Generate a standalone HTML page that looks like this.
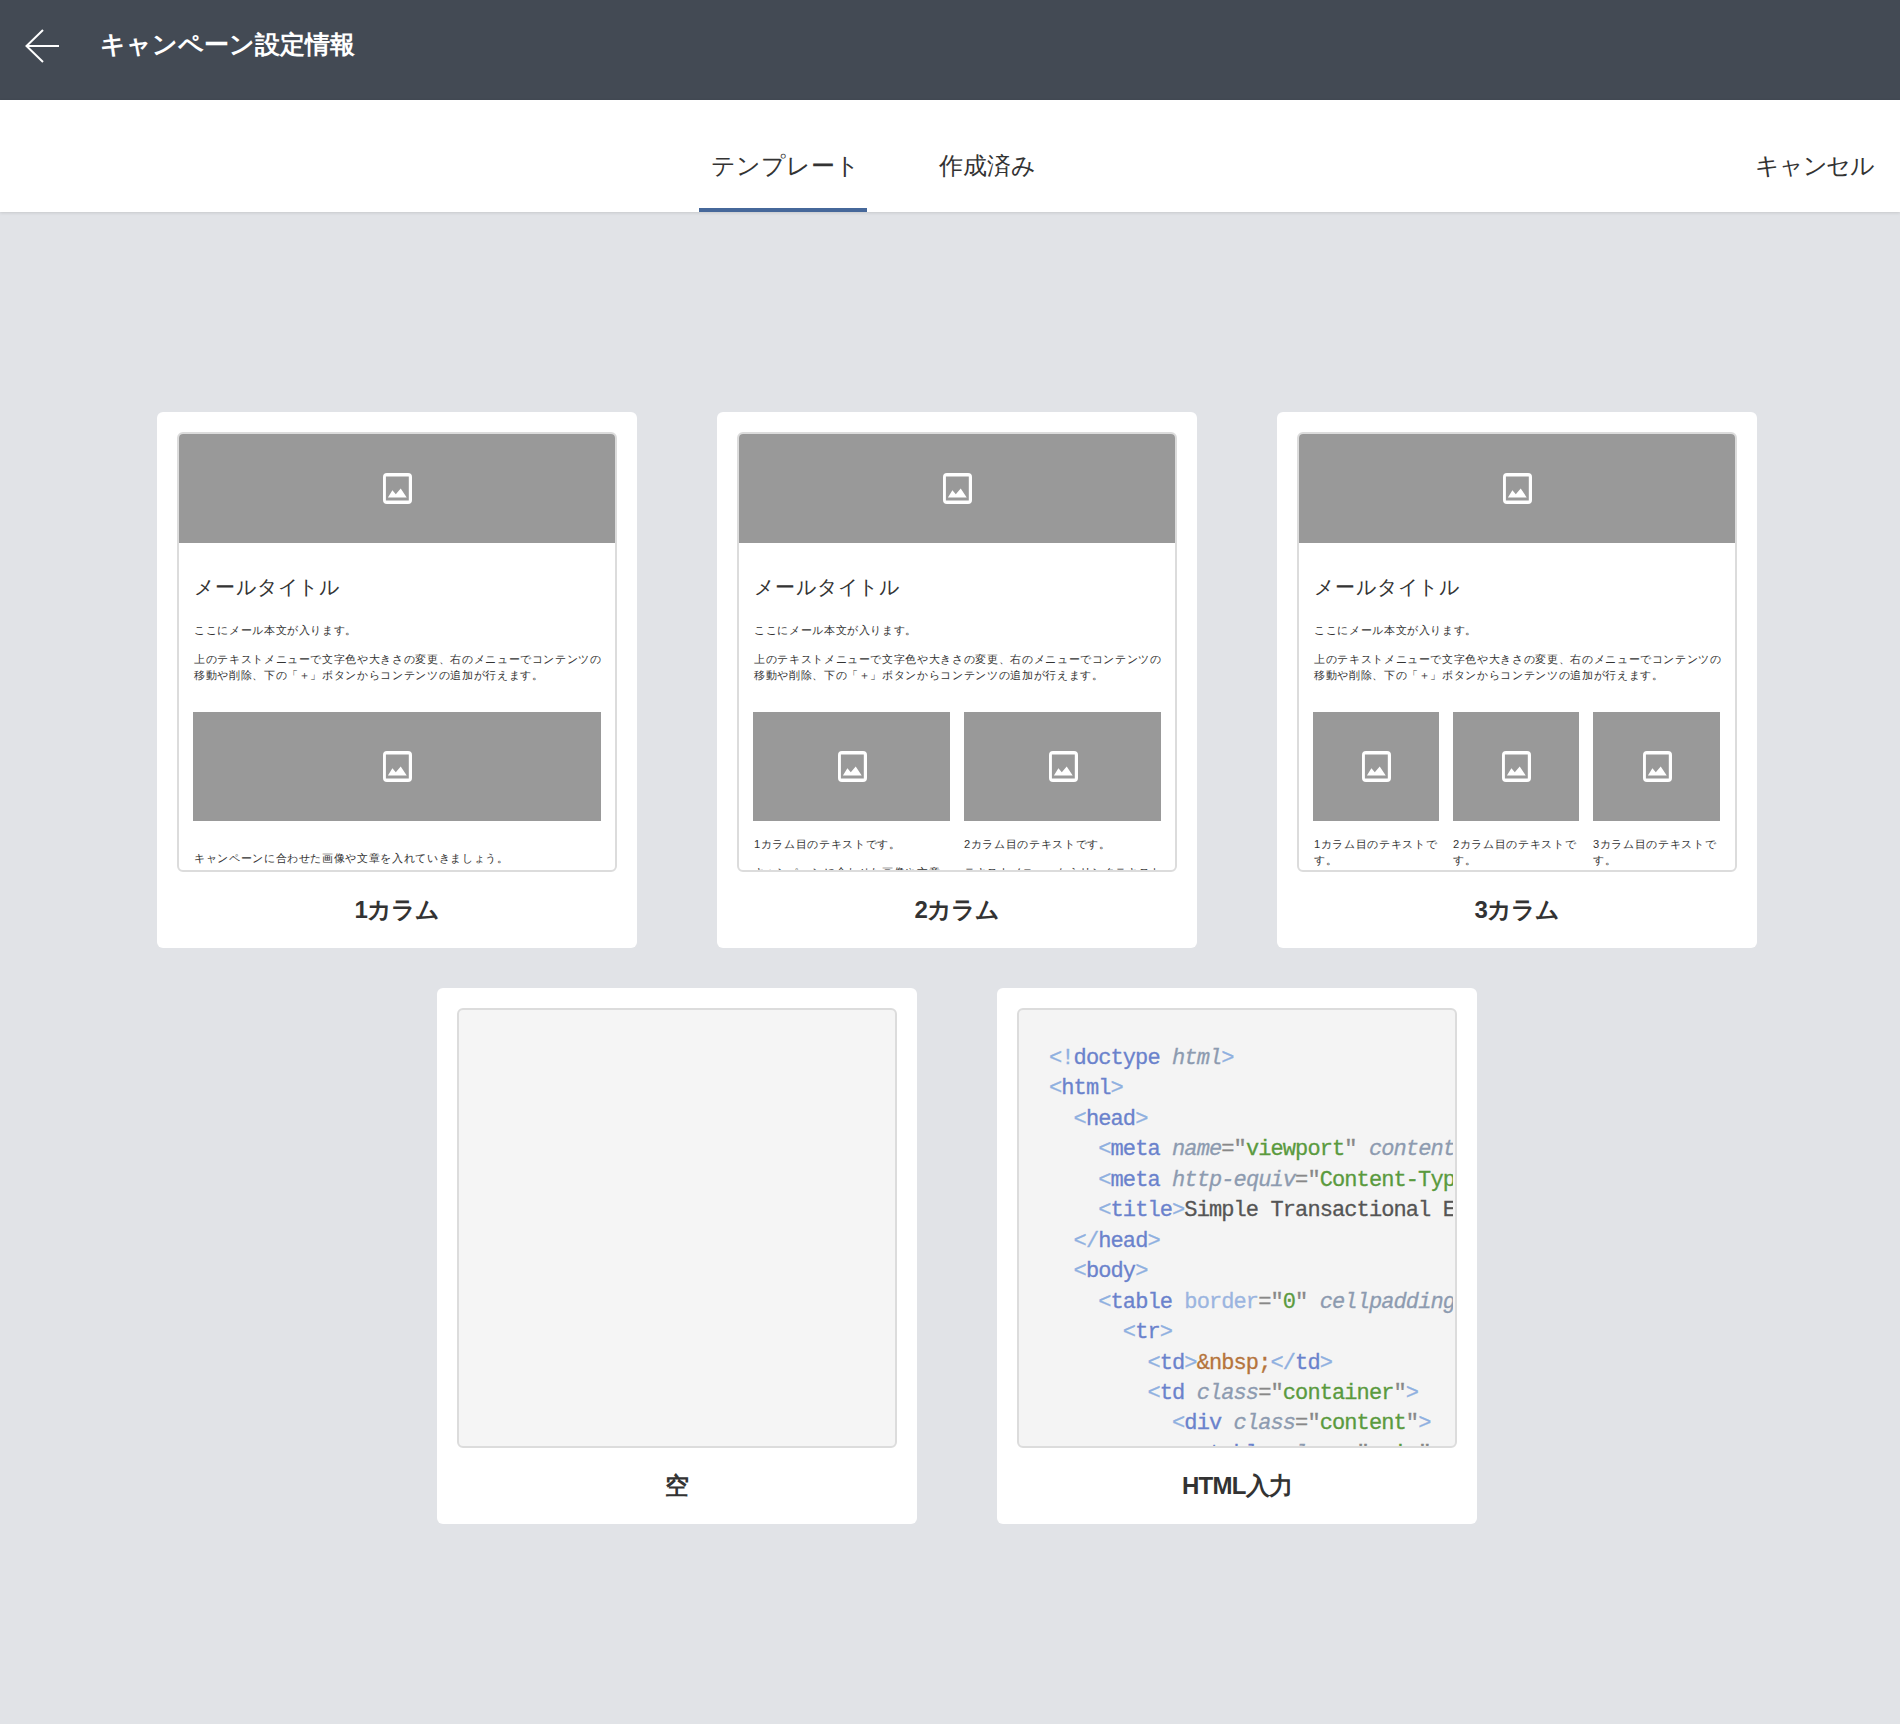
<!DOCTYPE html>
<html lang="ja">
<head>
<meta charset="utf-8">
<style>
html,body{margin:0;padding:0}
body{width:1900px;height:1724px;background:#e1e3e7;position:relative;overflow:hidden;font-family:"Liberation Sans",sans-serif;color:#333}
.hdr{position:absolute;left:0;top:0;width:1900px;height:100px;background:#434a54}
.hdr svg{position:absolute;left:0;top:0}
.hdr .ttl{position:absolute;left:100px;top:27px;font-size:25px;font-weight:bold;color:#fff;line-height:34px;white-space:nowrap}
.tabs{position:absolute;left:0;top:100px;width:1900px;height:112px;background:#fff;box-shadow:0 1px 3px rgba(0,0,0,.12)}
.tab{position:absolute;top:50px;font-size:24px;line-height:32px;color:#333;white-space:nowrap}
.uline{position:absolute;left:699px;top:108px;width:168px;height:4px;background:#46689a}
.card{position:absolute;width:480px;height:536px;background:#fff;border-radius:6px}
.pv{position:absolute;left:20px;top:20px;width:440px;height:440px;box-sizing:border-box;border:2px solid #dcdcdc;border-radius:6px;overflow:hidden;background:#fff}
.lbl{position:absolute;left:0;width:480px;top:482px;text-align:center;font-size:24px;letter-spacing:-0.8px;font-weight:bold;line-height:32px;color:#333}
.img{position:absolute;background:#999}
.img svg{position:absolute;left:50%;top:50%;margin-left:-14px;margin-top:-16px}
.mt{position:absolute;left:15px;top:138.5px;font-size:20px;letter-spacing:0.9px;line-height:28px;color:#333;white-space:nowrap}
.code{position:absolute;left:30px;top:34px;margin:0;font-family:"Liberation Mono",monospace;font-size:22px;letter-spacing:-0.9px;-webkit-text-stroke:0.3px currentColor;line-height:30.45px;color:#333;white-space:pre}
.code .b{color:#8fb0e0}.code .t{color:#6a82cc}.code .a{color:#8d9bb0;font-style:italic}.code .c{color:#9bb5e0}.code .e{color:#888}.code .g{color:#5a9a3e}.code .n{color:#b5743c}.code .x{color:#555}
.s{position:absolute;left:15px;font-size:11.15px;letter-spacing:0.65px;line-height:16px;color:#333;white-space:nowrap}
</style>
</head>
<body>
<div class="hdr">
<svg width="80" height="100" viewBox="0 0 80 100"><path d="M43 30 L26.5 46 L43 62 M26.5 46 L59 46" fill="none" stroke="#fff" stroke-width="2"/></svg>
<div class="ttl">キャンペーン設定情報</div>
</div>
<div class="tabs">
<div class="tab" style="left:711px">テンプレート</div>
<div class="tab" style="left:939px">作成済み</div>
<div class="tab" style="left:1755px;letter-spacing:-1.2px">キャンセル</div>
<div class="uline"></div>
</div>

<!-- card 1 -->
<div class="card" style="left:157px;top:412px">
<div class="pv">
<div class="img" style="left:0;top:0;width:436px;height:109px"><svg width="30" height="32" viewBox="0 0 30 32"><path fill="#fff" fill-rule="evenodd" d="M4 0H25A4 4 0 0 1 29 4V27A4 4 0 0 1 25 31H4A4 4 0 0 1 0 27V4A4 4 0 0 1 4 0ZM2.9 3.5V27.4H25.8V3.5Z"/><path d="M4.9 24.4 L9.4 17.3 L12.8 21.3 L17.7 15.5 L23.7 24.4 Z" fill="#fff"/></svg></div>
<div class="mt">メールタイトル</div>
<div class="s" style="top:188px">ここにメール本文が入ります。</div>
<div class="s" style="top:217px">上のテキストメニューで文字色や大きさの変更、右のメニューでコンテンツの<br>移動や削除、下の「＋」ボタンからコンテンツの追加が行えます。</div>
<div class="img" style="left:14px;top:278px;width:408px;height:109px"><svg width="30" height="32" viewBox="0 0 30 32"><path fill="#fff" fill-rule="evenodd" d="M4 0H25A4 4 0 0 1 29 4V27A4 4 0 0 1 25 31H4A4 4 0 0 1 0 27V4A4 4 0 0 1 4 0ZM2.9 3.5V27.4H25.8V3.5Z"/><path d="M4.9 24.4 L9.4 17.3 L12.8 21.3 L17.7 15.5 L23.7 24.4 Z" fill="#fff"/></svg></div>
<div class="s" style="top:416px">キャンペーンに合わせた画像や文章を入れていきましょう。</div>
</div>
<div class="lbl">1カラム</div>
</div>

<!-- card 2 -->
<div class="card" style="left:717px;top:412px">
<div class="pv">
<div class="img" style="left:0;top:0;width:436px;height:109px"><svg width="30" height="32" viewBox="0 0 30 32"><path fill="#fff" fill-rule="evenodd" d="M4 0H25A4 4 0 0 1 29 4V27A4 4 0 0 1 25 31H4A4 4 0 0 1 0 27V4A4 4 0 0 1 4 0ZM2.9 3.5V27.4H25.8V3.5Z"/><path d="M4.9 24.4 L9.4 17.3 L12.8 21.3 L17.7 15.5 L23.7 24.4 Z" fill="#fff"/></svg></div>
<div class="mt">メールタイトル</div>
<div class="s" style="top:188px">ここにメール本文が入ります。</div>
<div class="s" style="top:217px">上のテキストメニューで文字色や大きさの変更、右のメニューでコンテンツの<br>移動や削除、下の「＋」ボタンからコンテンツの追加が行えます。</div>
<div class="img" style="left:14px;top:278px;width:197px;height:109px"><svg width="30" height="32" viewBox="0 0 30 32"><path fill="#fff" fill-rule="evenodd" d="M4 0H25A4 4 0 0 1 29 4V27A4 4 0 0 1 25 31H4A4 4 0 0 1 0 27V4A4 4 0 0 1 4 0ZM2.9 3.5V27.4H25.8V3.5Z"/><path d="M4.9 24.4 L9.4 17.3 L12.8 21.3 L17.7 15.5 L23.7 24.4 Z" fill="#fff"/></svg></div>
<div class="img" style="left:225px;top:278px;width:197px;height:109px"><svg width="30" height="32" viewBox="0 0 30 32"><path fill="#fff" fill-rule="evenodd" d="M4 0H25A4 4 0 0 1 29 4V27A4 4 0 0 1 25 31H4A4 4 0 0 1 0 27V4A4 4 0 0 1 4 0ZM2.9 3.5V27.4H25.8V3.5Z"/><path d="M4.9 24.4 L9.4 17.3 L12.8 21.3 L17.7 15.5 L23.7 24.4 Z" fill="#fff"/></svg></div>
<div class="s" style="top:402px">1カラム目のテキストです。</div>
<div class="s" style="left:225px;top:402px">2カラム目のテキストです。</div>
<div class="s" style="top:430px">キャンペーンに合わせた画像や文章</div>
<div class="s" style="left:225px;top:430px">テキストメニューからリンクテキスト</div>
</div>
<div class="lbl">2カラム</div>
</div>

<!-- card 3 -->
<div class="card" style="left:1277px;top:412px">
<div class="pv">
<div class="img" style="left:0;top:0;width:436px;height:109px"><svg width="30" height="32" viewBox="0 0 30 32"><path fill="#fff" fill-rule="evenodd" d="M4 0H25A4 4 0 0 1 29 4V27A4 4 0 0 1 25 31H4A4 4 0 0 1 0 27V4A4 4 0 0 1 4 0ZM2.9 3.5V27.4H25.8V3.5Z"/><path d="M4.9 24.4 L9.4 17.3 L12.8 21.3 L17.7 15.5 L23.7 24.4 Z" fill="#fff"/></svg></div>
<div class="mt">メールタイトル</div>
<div class="s" style="top:188px">ここにメール本文が入ります。</div>
<div class="s" style="top:217px">上のテキストメニューで文字色や大きさの変更、右のメニューでコンテンツの<br>移動や削除、下の「＋」ボタンからコンテンツの追加が行えます。</div>
<div class="img" style="left:14px;top:278px;width:126px;height:109px"><svg width="30" height="32" viewBox="0 0 30 32"><path fill="#fff" fill-rule="evenodd" d="M4 0H25A4 4 0 0 1 29 4V27A4 4 0 0 1 25 31H4A4 4 0 0 1 0 27V4A4 4 0 0 1 4 0ZM2.9 3.5V27.4H25.8V3.5Z"/><path d="M4.9 24.4 L9.4 17.3 L12.8 21.3 L17.7 15.5 L23.7 24.4 Z" fill="#fff"/></svg></div>
<div class="img" style="left:154px;top:278px;width:126px;height:109px"><svg width="30" height="32" viewBox="0 0 30 32"><path fill="#fff" fill-rule="evenodd" d="M4 0H25A4 4 0 0 1 29 4V27A4 4 0 0 1 25 31H4A4 4 0 0 1 0 27V4A4 4 0 0 1 4 0ZM2.9 3.5V27.4H25.8V3.5Z"/><path d="M4.9 24.4 L9.4 17.3 L12.8 21.3 L17.7 15.5 L23.7 24.4 Z" fill="#fff"/></svg></div>
<div class="img" style="left:294px;top:278px;width:127px;height:109px"><svg width="30" height="32" viewBox="0 0 30 32"><path fill="#fff" fill-rule="evenodd" d="M4 0H25A4 4 0 0 1 29 4V27A4 4 0 0 1 25 31H4A4 4 0 0 1 0 27V4A4 4 0 0 1 4 0ZM2.9 3.5V27.4H25.8V3.5Z"/><path d="M4.9 24.4 L9.4 17.3 L12.8 21.3 L17.7 15.5 L23.7 24.4 Z" fill="#fff"/></svg></div>
<div class="s" style="top:402px">1カラム目のテキストで<br>す。</div>
<div class="s" style="left:154px;top:402px">2カラム目のテキストで<br>す。</div>
<div class="s" style="left:294px;top:402px">3カラム目のテキストで<br>す。</div>
</div>
<div class="lbl">3カラム</div>
</div>

<!-- card 4 -->
<div class="card" style="left:437px;top:988px">
<div class="pv" style="background:#f5f5f5"></div>
<div class="lbl">空</div>
</div>

<!-- card 5 -->
<div class="card" style="left:997px;top:988px">
<div class="pv" style="background:#f4f4f4"><div style="position:absolute;left:0;top:0;width:434px;height:436px;overflow:hidden"><pre class="code"><span class="b">&lt;!</span><span class="t">doctype</span> <span class="a">html</span><span class="b">&gt;</span>
<span class="b">&lt;</span><span class="t">html</span><span class="b">&gt;</span>
  <span class="b">&lt;</span><span class="t">head</span><span class="b">&gt;</span>
    <span class="b">&lt;</span><span class="t">meta</span> <span class="a">name</span><span class="e">="</span><span class="g">viewport</span><span class="e">"</span> <span class="a">content</span><span class="e">="</span><span class="g">width=device-width</span><span class="b">&gt;</span>
    <span class="b">&lt;</span><span class="t">meta</span> <span class="a">http-equiv</span><span class="e">="</span><span class="g">Content-Type</span><span class="e">"</span><span class="b">&gt;</span>
    <span class="b">&lt;</span><span class="t">title</span><span class="b">&gt;</span><span class="x">Simple Transactional Email</span><span class="b">&lt;/</span><span class="t">title</span><span class="b">&gt;</span>
  <span class="b">&lt;/</span><span class="t">head</span><span class="b">&gt;</span>
  <span class="b">&lt;</span><span class="t">body</span><span class="b">&gt;</span>
    <span class="b">&lt;</span><span class="t">table</span> <span class="c">border</span><span class="e">="</span><span class="g">0</span><span class="e">"</span> <span class="a">cellpadding</span><span class="e">="</span><span class="g">0</span><span class="e">"</span><span class="b">&gt;</span>
      <span class="b">&lt;</span><span class="t">tr</span><span class="b">&gt;</span>
        <span class="b">&lt;</span><span class="t">td</span><span class="b">&gt;</span><span class="n">&amp;nbsp;</span><span class="b">&lt;/</span><span class="t">td</span><span class="b">&gt;</span>
        <span class="b">&lt;</span><span class="t">td</span> <span class="a">class</span><span class="e">="</span><span class="g">container</span><span class="e">"</span><span class="b">&gt;</span>
          <span class="b">&lt;</span><span class="t">div</span> <span class="a">class</span><span class="e">="</span><span class="g">content</span><span class="e">"</span><span class="b">&gt;</span>
            <span class="b">&lt;</span><span class="t">table</span> <span class="a">class</span><span class="e">="</span><span class="g">main</span><span class="e">"</span><span class="b">&gt;</span>
</pre></div></div>
<div class="lbl">HTML入力</div>
</div>
</body>
</html>
